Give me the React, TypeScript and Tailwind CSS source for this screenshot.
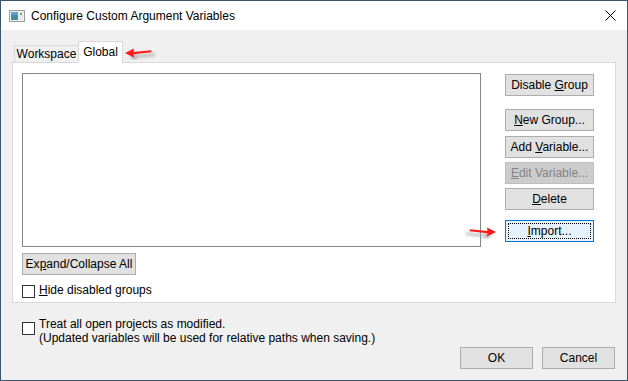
import React from "react";

const font = { fontFamily: '"Liberation Sans", Arial, sans-serif' };

const Btn = ({
  children,
  className = "",
  disabled = false,
  focused = false,
}: {
  children: React.ReactNode;
  className?: string;
  disabled?: boolean;
  focused?: boolean;
}) => (
  <div
    className={`flex h-[22px] items-center justify-center text-[12px] ${
      disabled
        ? "border border-[#bfbfbf] bg-[#cccccc] text-[#838383]"
        : focused
        ? "border border-[#0078d7] bg-[#e5f1fb] p-[2px] text-black"
        : "border border-[#adadad] bg-[#e1e1e1] text-black"
    } ${className}`}
  >
    {focused ? (
      <div className="flex h-full w-full items-center justify-center border border-dotted border-black">
        {children}
      </div>
    ) : (
      children
    )}
  </div>
);

const Check = () => <div className="h-[13px] w-[13px] shrink-0 border border-[#333333] bg-white" />;

const RedArrow = ({ className, flip }: { className: string; flip?: boolean }) => (
  <svg className={className} width="36" height="14" viewBox="0 0 36 14">
    <defs>
      <filter id={flip ? "shR" : "shL"} x="-20%" y="-50%" width="140%" height="200%">
        <feGaussianBlur stdDeviation="1.4" />
      </filter>
    </defs>
    <g transform={flip ? "translate(36,0) scale(-1,1)" : undefined}>
      <path d="M4 9 L12 4.5 L11 8 L30 6 L30 8.5 L11 10.5 L12 14 Z" fill="#9a9a9a" opacity="0.7" filter={`url(#${flip ? "shR" : "shL"})`} transform="translate(2,1.5)" />
      <path d="M2 7 L11 2.5 L10.5 6 L28 4.2 L28.5 6.2 L10.5 8.2 L11 11.5 Z" fill="#ff1a1a" />
    </g>
  </svg>
);

const App = () => {
  return (
    <div
      className="relative flex h-[381px] w-[628px] flex-col border border-[#3a5670] bg-[#f0f0f0] text-[12px] text-black"
      style={font}
    >
      {/* title bar */}
      <div className="flex h-[29px] shrink-0 items-center bg-white pl-[8px] pr-[10px]">
        <svg width="16" height="12" viewBox="0 0 16 12" className="mr-[6px]">
          <rect x="0.5" y="0.5" width="15" height="11" fill="#f2f2f2" stroke="#9a9a9a" />
          <rect x="2" y="2" width="7" height="8" fill="#3f8f9a" />
          <rect x="2" y="2" width="7" height="3" fill="#5aa0d8" />
          <rect x="10" y="2" width="4" height="8" fill="#e6e6e6" />
          <rect x="11" y="3" width="2" height="2" fill="#6fb36a" />
        </svg>
        <span className="text-[12px]">Configure Custom Argument Variables</span>
        <svg width="11" height="11" viewBox="0 0 11 11" className="ml-auto mr-[1px]">
          <path d="M0.5 0.5 L10.5 10.5 M10.5 0.5 L0.5 10.5" stroke="#000" strokeWidth="1" />
        </svg>
      </div>

      <div className="flex flex-1 flex-col px-[11px] pb-[11px] pt-[11px]">
        {/* tabs */}
        <div className="relative z-10 flex h-[21px] items-end pl-[2px]">
          <div className="flex h-[17px] w-[65px] items-center justify-center border border-b-0 border-[#d9d9d9] bg-[#f0f0f0]">
            Workspace
          </div>
          <div className="-ml-[1px] mb-[-1px] flex h-[22px] w-[45px] items-center justify-center border border-b-0 border-[#d9d9d9] bg-white pb-[1px]">
            Global
          </div>
        </div>

        {/* tab panel */}
        <div className="flex h-[241px] w-[604px] border border-[#d9d9d9] bg-white pl-[9px] pt-[10px]">
          <div className="flex flex-col">
            <div className="h-[174px] w-[459px] border border-[#828790] bg-white" />
            <Btn className="mt-[6px] w-[114px]">
              <span>
                Ex<u>p</u>and/Collapse All
              </span>
            </Btn>
            <div className="mt-[8px] flex items-center gap-[4px]">
              <Check />
              <span className="-mt-[2px]">
                <u>H</u>ide disabled groups
              </span>
            </div>
          </div>
          <div className="ml-[24px] flex w-[89px] flex-col pt-[1px]">
            <Btn>
              <span>
                Disable <u>G</u>roup
              </span>
            </Btn>
            <Btn className="mt-[13px]">
              <span>
                <u>N</u>ew Group...
              </span>
            </Btn>
            <Btn className="mt-[5px]">
              <span>
                Add <u>V</u>ariable...
              </span>
            </Btn>
            <Btn className="mt-[4px]" disabled>
              <span>
                <u>E</u>dit Variable...
              </span>
            </Btn>
            <Btn className="mt-[4px]">
              <span>
                <u>D</u>elete
              </span>
            </Btn>
            <Btn className="mt-[10px]" focused>
              <span>
                <u>I</u>mport...
              </span>
            </Btn>
          </div>
        </div>

        {/* options */}
        <div className="mt-[19px] flex items-start gap-[4px] pl-[10px]">
          <Check />
          <div className="-mt-[5px] leading-[14px]">
            <p>Treat all open projects as modified.</p>
            <p>(Updated variables will be used for relative paths when saving.)</p>
          </div>
        </div>

        <div className="mt-auto flex justify-end gap-[9px] pr-[1px]">
          <Btn className="w-[73px]">OK</Btn>
          <Btn className="w-[73px]">Cancel</Btn>
        </div>
      </div>

      {/* annotation arrows */}
      <RedArrow className="absolute left-[122px] top-[45px]" />
      <RedArrow className="absolute left-[461px] top-[224px]" flip />
    </div>
  );
};

export default App;
